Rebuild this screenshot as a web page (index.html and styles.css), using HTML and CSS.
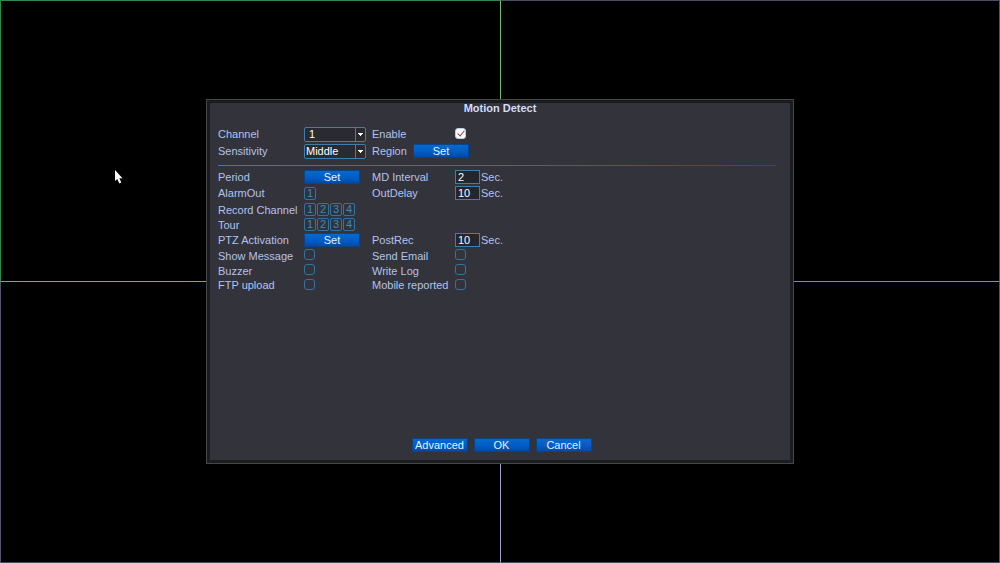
FILE: index.html
```
<!DOCTYPE html>
<html lang="en">
<head>
<meta charset="utf-8">
<title>Motion Detect</title>
<link rel="stylesheet" href="styles.css">
</head>
<body>
<main class="screen">
  <div class="pane pane-active"></div>
  <div class="pane pane-right"></div>
  <div class="pane pane-bottom"></div>
  <div class="pane pane-right pane-bottom"></div>

  <form class="dialog" role="dialog" aria-labelledby="title">
    <h1 class="title" id="title">Motion Detect</h1>

    <div class="fields fields-main">
      <label for="channel">Channel</label>
      <span class="select"><select id="channel" class="indent"><option>1</option><option>2</option><option>3</option><option>4</option></select></span>
      <label for="enable">Enable</label>
      <span class="control"><input type="checkbox" id="enable" checked></span>

      <label for="sensitivity">Sensitivity</label>
      <span class="select"><select id="sensitivity"><option>Middle</option></select></span>
      <span class="region"><label for="region">Region</label><button type="button" class="button" id="region">Set</button></span>
    </div>

    <hr class="rule">

    <div class="fields fields-detail">
      <label for="period">Period</label>
      <button type="button" class="button" id="period">Set</button>
      <label for="interval">MD Interval</label>
      <span class="control"><input type="text" id="interval" value="2">Sec.</span>

      <span>AlarmOut</span>
      <span class="channels"><button type="button">1</button></span>
      <label for="delay">OutDelay</label>
      <span class="control"><input type="text" id="delay" value="10">Sec.</span>

      <span>Record Channel</span>
      <span class="channels wide"><button type="button">1</button><button type="button">2</button><button type="button">3</button><button type="button">4</button></span>

      <span>Tour</span>
      <span class="channels wide"><button type="button">1</button><button type="button">2</button><button type="button">3</button><button type="button">4</button></span>

      <label for="ptz">PTZ Activation</label>
      <button type="button" class="button" id="ptz">Set</button>
      <label for="postrec">PostRec</label>
      <span class="control"><input type="text" id="postrec" value="10">Sec.</span>

      <label for="message">Show Message</label>
      <span class="control"><input type="checkbox" id="message"></span>
      <label for="email">Send Email</label>
      <span class="control"><input type="checkbox" id="email"></span>

      <label for="buzzer">Buzzer</label>
      <span class="control"><input type="checkbox" id="buzzer"></span>
      <label for="log">Write Log</label>
      <span class="control"><input type="checkbox" id="log"></span>

      <label for="ftp">FTP upload</label>
      <span class="control"><input type="checkbox" id="ftp"></span>
      <label for="mobile">Mobile reported</label>
      <span class="control"><input type="checkbox" id="mobile"></span>
    </div>

    <footer class="actions">
      <button type="button" class="button">Advanced</button>
      <button type="submit" class="button">OK</button>
      <button type="button" class="button">Cancel</button>
    </footer>
  </form>

  <svg class="pointer" width="8" height="14" viewBox="0 0 8 14" aria-hidden="true"><path d="M0 0V11L2.2 9L4.5 13.5L6.3 12.6L4.3 8.2H7.5Z" fill="#fff"/></svg>
</main>
</body>
</html>
```
FILE: styles.css
```
* {
  box-sizing: border-box;
}

body {
  margin: 0;
  background: #000;
  color: #b4c2ee;
  font: 11px/14px "Liberation Sans", Arial, sans-serif;
}

.screen {
  position: relative;
  display: grid;
  grid-template: 281fr 282fr / 1fr 1fr;
  min-height: 100vh;
}

.pane {
  border-top: 1px solid #8886b0;
  border-left: 1px solid #55536c;
}

.pane-active {
  border-color: #2f8a45;
}

.pane-right {
  border-right: 1px solid #55536c;
  border-top-color: #4c4a62;
}

.pane-right:not(.pane-bottom) {
  border-left-color: #78b87c;
}

.pane-bottom {
  border-bottom: 1px solid #4c4a62;
  border-top-color: #6cb475;
}

.pane-right.pane-bottom {
  border-top-color: #8886b8;
  border-left-color: #a29cca;
}

.dialog {
  position: absolute;
  inset: 0;
  margin: auto;
  display: flex;
  flex-direction: column;
  width: 58.8%;
  min-width: 588px;
  height: 65%;
  min-height: 365px;
  padding: 0 14px 8px 8px;
  background: #32333b;
  border: 4px solid #1b1c1f;
  outline: 1px solid #464747;
  outline-offset: -1px;
}

.title {
  margin: 0 -14px 13px -8px;
  color: #d3dcfa;
  font-size: 11px;
  line-height: 10px;
  font-weight: bold;
  text-align: center;
}

.fields {
  display: grid;
  grid-template-columns: 86px 68px 83px 1fr;
  align-items: center;
  white-space: nowrap;
}

.fields-main {
  grid-auto-rows: 17px;
}

.fields-detail {
  grid-template-rows: 16px 17px 16px 14px 16px 16px 14px 15px;
}

.rule {
  width: 100%;
  height: 1px;
  margin: 5px 0 3px;
  border: 0;
  background: linear-gradient(90deg, #3b78b4, #326b9e 55%, #2d4b66);
}

.select {
  position: relative;
  width: 62px;
  height: 15px;
}

.select select {
  appearance: none;
  width: 100%;
  height: 15px;
  padding: 0 12px 0 1px;
  background: #292a32;
  border: 1px solid #407eae;
  border-radius: 2px;
  color: #fff;
  font: inherit;
  line-height: 13px;
}

.select .indent {
  padding-left: 4px;
}

.select::after {
  content: "";
  position: absolute;
  top: 1px;
  right: 1px;
  width: 9px;
  height: 13px;
  border-left: 1px solid #407eae;
  background: linear-gradient(#fff, #fff) 2px 5px / 5px 1px no-repeat,
    linear-gradient(#fff, #fff) 3px 6px / 3px 1px no-repeat,
    linear-gradient(#fff, #fff) 4px 7px / 1px 1px no-repeat;
  pointer-events: none;
}

.button {
  width: 56px;
  height: 14px;
  padding: 0;
  background: linear-gradient(#0869cb, #005bc4 60%, #004aa4);
  border: 1px solid #07458b;
  color: #e5f3ff;
  font: inherit;
  line-height: 12px;
}

.region {
  grid-column: span 2;
  display: flex;
  align-items: center;
}

.region label {
  width: 41px;
}

.control {
  display: flex;
  align-items: center;
  gap: 1px;
}

input[type="text"] {
  width: 25px;
  height: 14px;
  padding: 0 2px;
  background: #24252d;
  border: 1px solid #407eae;
  color: #fff;
  font: inherit;
}

input[type="checkbox"] {
  appearance: none;
  width: 11px;
  height: 11px;
  margin: 0 0 2px;
  border: 1px solid #36729c;
  border-radius: 3px;
}

input[type="checkbox"]:checked {
  position: relative;
  background: #fff;
  border-color: #b4d0ee;
}

input[type="checkbox"]:checked::after {
  content: "";
  position: absolute;
  left: 3px;
  top: 0;
  width: 3px;
  height: 6px;
  border: solid #a8364a;
  border-width: 0 1px 1px 0;
  transform: rotate(40deg);
}

.channels {
  display: flex;
  gap: 1px;
}

.wide {
  grid-column: span 3;
}

.channels button {
  width: 12px;
  height: 13px;
  padding: 0;
  background: #2b3542;
  border: 1px solid #36729c;
  border-radius: 2px;
  color: #4687b4;
  font: inherit;
  line-height: 11px;
}

.actions {
  display: flex;
  justify-content: center;
  gap: 6px;
  margin: auto -9px 0 0;
}

.pointer {
  position: absolute;
  left: 115px;
  top: 170px;
}
```
